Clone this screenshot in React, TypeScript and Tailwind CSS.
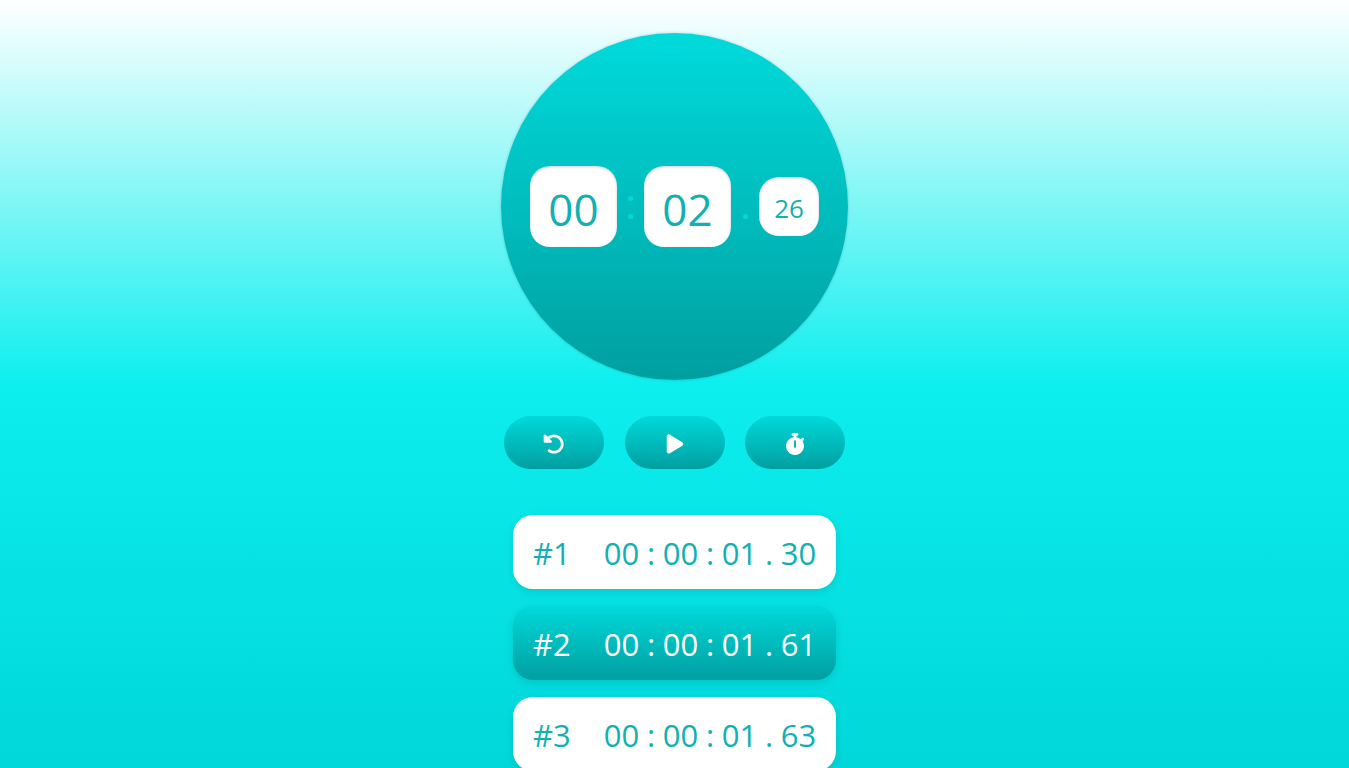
import type { ReactNode } from "react";
import { FaPlay, FaStopwatch } from "react-icons/fa6";

interface Lap {
  id: number;
  parts: [string, string, string, string];
}

const laps: Lap[] = [
  { id: 1, parts: ["00", "00", "01", "30"] },
  { id: 2, parts: ["00", "00", "01", "61"] },
  { id: 3, parts: ["00", "00", "01", "63"] },
];

function ResetIcon() {
  return (
    <svg viewBox="0 0 512 512" className="size-[22px]" fill="currentColor" aria-hidden="true">
      <path d="M480 256c0 123.4-100.5 223.9-223.9 223.9c-48.84 0-95.17-15.58-134.2-44.86c-14.12-10.59-16.97-30.66-6.375-44.77c10.59-14.12 30.62-16.94 44.81-6.375c27.84 20.91 61 31.94 95.88 31.94C344.3 415.8 416 344.1 416 256s-71.69-159.8-159.8-159.8c-37.46 0-73.09 13.49-101.3 36.64l45.12 45.14c17.01 17.02 4.955 46.1-19.1 46.1H35.17C24.58 224.1 16 215.5 16 204.9V59.04c0-24.04 29.07-36.08 46.07-19.07l47.6 47.63C149.9 52.71 201.5 32.11 256.1 32.11C379.5 32.11 480 132.6 480 256z" />
    </svg>
  );
}

function Digits({ children }: { children: ReactNode }) {
  return (
    <span className="flex h-[81px] w-[87px] items-center justify-center rounded-[20px] bg-white pt-1 text-[44px] leading-none text-[#12b0b3] shadow-[inset_0_1px_3px_rgba(0,0,0,0.2)]">
      {children}
    </span>
  );
}

function Dot() {
  return <span className="size-[5px] rounded-full bg-[#00d9da]" />;
}

function ControlButton({ label, children }: { label: string; children: ReactNode }) {
  return (
    <button
      type="button"
      aria-label={label}
      className="flex h-[53px] w-[100px] cursor-pointer items-center justify-center rounded-full bg-linear-to-b/srgb from-[#00d9da] to-[#009fa0] pt-0.5 text-white"
    >
      {children}
    </button>
  );
}

function LapRow({ lap }: { lap: Lap }) {
  const [hours, minutes, seconds, hundredths] = lap.parts;
  const tone =
    lap.id % 2 === 0
      ? "bg-linear-to-b/srgb from-[#00d9da] to-[#009fa0] text-white"
      : "bg-white text-[#12b0b3]";
  return (
    <li
      className={`flex h-[74px] items-center justify-between rounded-[20px] px-5 pt-0.5 text-[31px] leading-none shadow-[0_3px_8px_rgba(0,0,0,0.1)] ${tone}`}
    >
      <span>#{lap.id}</span>
      <span className="grid grid-cols-[35px_24px_35px_24px_35px_24px_35px] justify-items-center">
        <span>{hours}</span>
        <span>:</span>
        <span>{minutes}</span>
        <span>:</span>
        <span>{seconds}</span>
        <span>.</span>
        <span>{hundredths}</span>
      </span>
    </li>
  );
}

export default function App() {
  return (
    <main className="flex h-screen flex-col items-center overflow-y-auto bg-linear-to-b/srgb from-white via-[#0deeee] to-[#00d7d9] pt-[33px] font-['Open_Sans','Noto_Sans',sans-serif] [scrollbar-width:none]">
      <section
        aria-label="Elapsed time"
        className="flex size-[347px] shrink-0 items-center justify-center rounded-full bg-linear-to-b/srgb from-[#00dadb] via-[#00bdbe] to-[#009fa0] shadow-[0_0_3px_rgba(0,0,0,0.2)]"
      >
        <Digits>00</Digits>
        <span className="flex w-[27px] flex-col items-center gap-[13px] pt-0.5">
          <Dot />
          <Dot />
        </span>
        <Digits>02</Digits>
        <span className="flex w-7 justify-center pt-5">
          <Dot />
        </span>
        <span className="flex h-[59px] w-[60px] items-center justify-center rounded-[20px] bg-white pt-0.5 text-[26px] leading-none text-[#12b0b3] shadow-[inset_0_1px_3px_rgba(0,0,0,0.2)]">
          26
        </span>
      </section>

      <div className="mt-9 flex w-[341px] shrink-0 justify-between">
        <ControlButton label="Reset">
          <ResetIcon />
        </ControlButton>
        <ControlButton label="Start">
          <FaPlay size={22} />
        </ControlButton>
        <ControlButton label="Lap">
          <FaStopwatch size={22} />
        </ControlButton>
      </div>

      <ol className="mt-[46px] flex w-[323px] shrink-0 flex-col gap-[17px]">
        {laps.map((lap) => (
          <LapRow key={lap.id} lap={lap} />
        ))}
      </ol>
    </main>
  );
}
